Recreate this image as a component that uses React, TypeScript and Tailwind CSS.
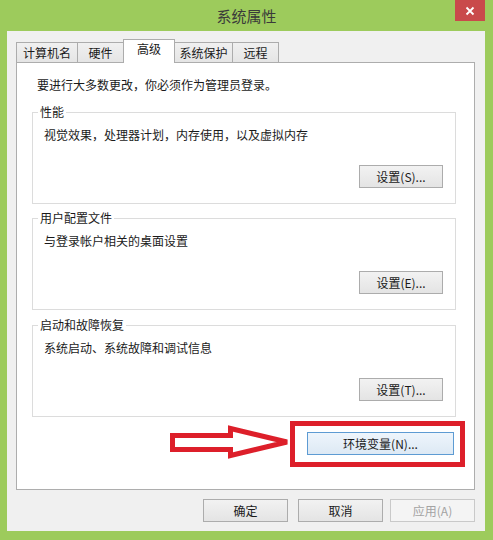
import React from "react";

const font = { fontFamily: '"Noto Sans CJK SC", "Noto Sans", sans-serif' };

function Btn({ label, w, disabled }: { label: string; w: string; disabled?: boolean }) {
  return (
    <div
      className={`${w} h-[23px] flex items-center justify-center text-[12px] leading-none border ${
        disabled
          ? "border-[#c9c9c9] bg-[#f4f4f4] text-[#a3a3a3]"
          : "border-[#acacac] bg-linear-to-b from-[#f2f2f2] to-[#e4e4e4] text-[#1a1a1a]"
      }`}
    >
      {label}
    </div>
  );
}

function Group({ title, desc, btn, mt }: { title: string; desc: string; btn: string; mt: string }) {
  return (
    <div className={`${mt} ml-[15px] w-[424px] h-[92px] border border-[#dcdcdc] relative flex flex-col`}>
      <span className="absolute -top-[9px] left-[5px] px-[2px] bg-white text-[12px] leading-[16px] text-[#1a1a1a]">
        {title}
      </span>
      <div className="pt-[14px] pl-[11px] text-[12px] leading-[16px] text-[#1a1a1a]">{desc}</div>
      <div className="mt-[22px] self-end mr-[12px]">
        <Btn label={btn} w="w-[84px]" />
      </div>
    </div>
  );
}

function Tab({ label, w, selected }: { label: string; w: string; selected?: boolean }) {
  if (selected) {
    return (
      <div
        className={`${w} h-[24px] -mb-px relative z-10 bg-white border border-b-0 border-[#acacac] -ml-px pt-[1px] text-[12px] leading-[16px] text-[#1a1a1a] flex justify-center`}
      >
        {label}
      </div>
    );
  }
  return (
    <div
      className={`${w} h-[20px] border border-b-0 border-[#acacac] -ml-px first:ml-0 bg-linear-to-b from-[#f0f0f0] to-[#e5e5e5] text-[12px] leading-[16px] text-[#1a1a1a] flex items-center justify-center`}
    >
      {label}
    </div>
  );
}

export default function App() {
  return (
    <div className="w-[493px] h-[540px] bg-[#9dcb5c] relative flex flex-col overflow-hidden" style={font}>
      {/* title bar */}
      <div className="h-[31px] flex">
        <div className="flex-1" />
        <div className="flex items-center text-[15px] text-[#3a3a3a] leading-none pb-[1px]">系统属性</div>
        <div className="flex-1 flex justify-end">
          <div className="w-[30px] h-[21px] mr-[8px] bg-[#c94a4b] flex items-center justify-center">
            <svg width="10" height="10" viewBox="0 0 10 10">
              <path d="M1.5 1.5 L8.5 8.5 M8.5 1.5 L1.5 8.5" stroke="#ffffff" strokeWidth="1.8" />
            </svg>
          </div>
        </div>
      </div>

      {/* client */}
      <div className="ml-[7px] w-[478px] h-[500px] bg-[#f0f0f0] flex flex-col">
        <div className="pt-[8px] pl-[9px] flex items-end">
          <Tab label="计算机名" w="w-[62px]" />
          <Tab label="硬件" w="w-[47px]" />
          <Tab label="高级" w="w-[52px]" selected />
          <Tab label="系统保护" w="w-[59px]" />
          <Tab label="远程" w="w-[47px]" />
        </div>

        <div className="ml-[9px] w-[459px] h-[428px] bg-white border border-[#adadad] flex flex-col">
          <div className="pt-[14px] pl-[20px] text-[12px] leading-[16px] text-[#1a1a1a]">
            要进行大多数更改，你必须作为管理员登录。
          </div>
          <Group mt="mt-[19px]" title="性能" desc="视觉效果，处理器计划，内存使用，以及虚拟内存" btn="设置(S)..." />
          <Group mt="mt-[14px]" title="用户配置文件" desc="与登录帐户相关的桌面设置" btn="设置(E)..." />
          <Group mt="mt-[15px]" title="启动和故障恢复" desc="系统启动、系统故障和调试信息" btn="设置(T)..." />
          <div className="mt-[4px] self-end mr-[9px] border-[5px] border-[#dd1f2a] pl-[12px] pt-[6px] pr-[6px] pb-[7px]">
            <div className="w-[147px] h-[23px] flex items-center justify-center text-[12px] leading-none border border-[#5d9bd3] bg-linear-to-b from-[#eef5fc] to-[#dde9f4] text-[#1a1a1a]">
              环境变量(N)...
            </div>
          </div>
        </div>

        <div className="mt-[9px] flex justify-end pr-[10px]">
          <Btn label="确定" w="w-[85px]" />
          <div className="w-[10px]" />
          <Btn label="取消" w="w-[85px]" />
          <div className="w-[7px]" />
          <Btn label="应用(A)" w="w-[85px]" disabled />
        </div>
      </div>

      {/* annotation arrow */}
      <svg className="absolute left-[160px] top-[415px]" width="140" height="55" viewBox="0 0 140 55">
        <polygon
          points="12.5,20.5 70.5,20.5 70.5,13.5 127,27 70.5,40.5 70.5,34.5 12.5,34.5"
          fill="#ffffff"
          stroke="#dd1f2a"
          strokeWidth="5"
          strokeLinejoin="miter"
        />
      </svg>
    </div>
  );
}
